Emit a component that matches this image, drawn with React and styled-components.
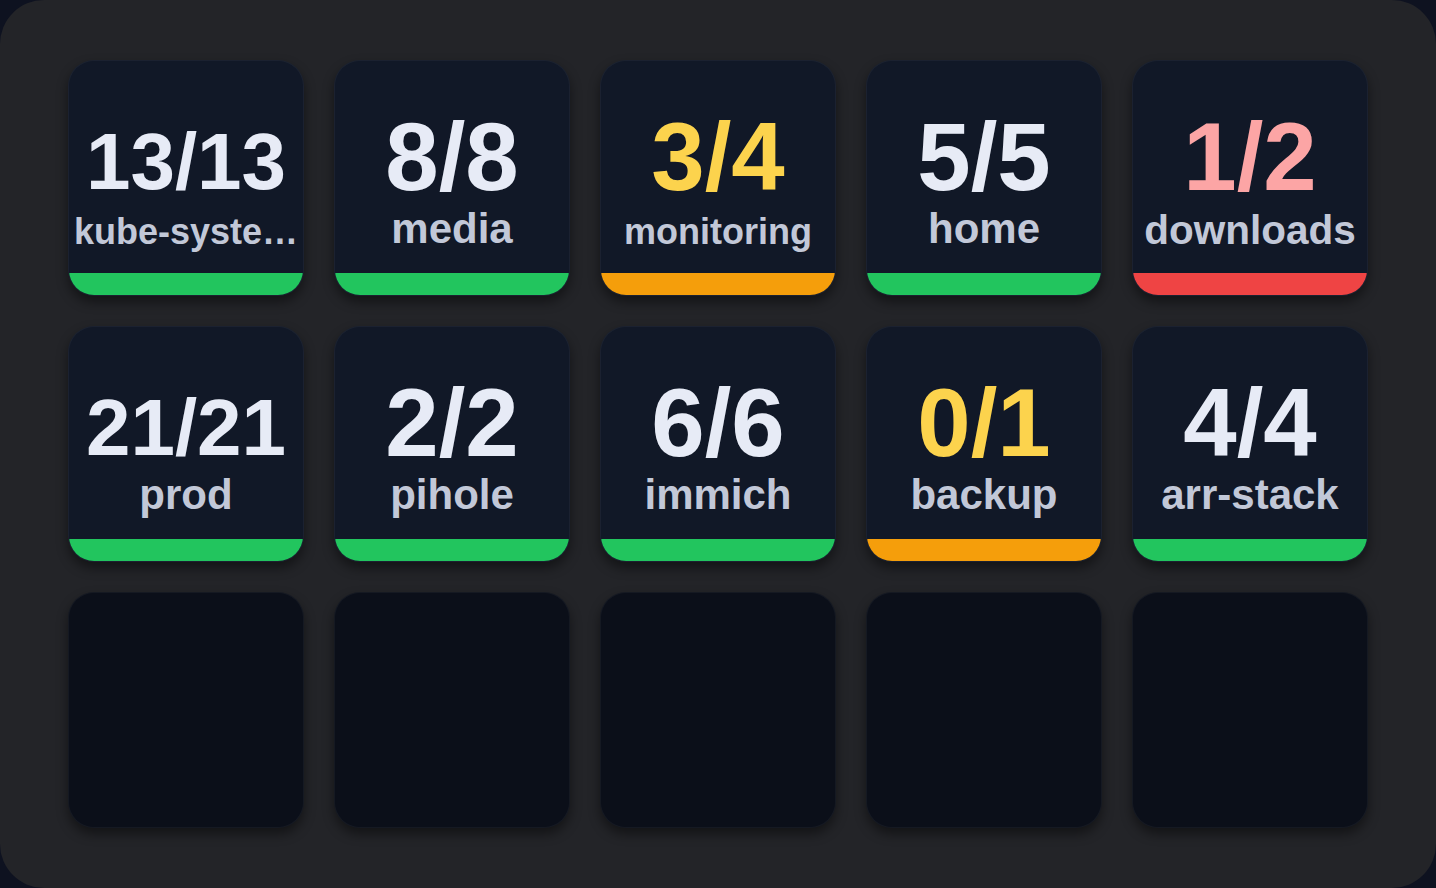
import React from "react";
import styled, { createGlobalStyle } from "styled-components";

const GlobalStyle = createGlobalStyle`
  html, body {
    margin: 0;
    padding: 0;
    background: #0e1220;
  }
  body {
    font-family: "Liberation Sans", Arial, sans-serif;
  }
`;

const TONES = {
  ok: { value: "#e7ebf6", bar: "#22c55e" },
  warn: { value: "#fcd34d", bar: "#f59e0b" },
  bad: { value: "#fca5a5", bar: "#ef4444" },
};

const namespaces = [
  { ready: 13, total: 13, name: "kube-syste…", valueSize: 80, nameSize: 36 },
  { ready: 8, total: 8, name: "media", valueSize: 96, nameSize: 42 },
  { ready: 3, total: 4, name: "monitoring", valueSize: 96, nameSize: 36 },
  { ready: 5, total: 5, name: "home", valueSize: 96, nameSize: 42 },
  { ready: 1, total: 2, name: "downloads", valueSize: 96, nameSize: 40.5 },
  { ready: 21, total: 21, name: "prod", valueSize: 80, nameSize: 42 },
  { ready: 2, total: 2, name: "pihole", valueSize: 96, nameSize: 42 },
  { ready: 6, total: 6, name: "immich", valueSize: 96, nameSize: 42 },
  { ready: 0, total: 1, name: "backup", valueSize: 96, nameSize: 42 },
  { ready: 4, total: 4, name: "arr-stack", valueSize: 96, nameSize: 42 },
];

// All pods ready is healthy, none or most ready is a warning, half or fewer is bad
const toneOf = ({ ready, total }) => {
  if (ready === total) return "ok";
  if (ready === 0 || ready / total > 0.5) return "warn";
  return "bad";
};

const Panel = styled.main`
  box-sizing: border-box;
  width: 1436px;
  height: 888px;
  background: #232428;
  border-radius: 44px;
  padding: 60px 68px;
`;

const Grid = styled.div`
  display: grid;
  grid-template-columns: repeat(5, 236px);
  grid-auto-rows: 236px;
  gap: 30px;
`;

const Tile = styled.div`
  box-sizing: border-box;
  display: flex;
  flex-direction: column;
  border-radius: 26px;
  overflow: hidden;
  border: 1px solid rgba(255, 255, 255, 0.045);
  background: ${(p) => (p.$empty ? "#0b0f19" : "#111827")};
  box-shadow: 0 6px 12px rgba(0, 0, 0, 0.45);
`;

const Body = styled.div`
  flex: 1;
  display: flex;
  flex-direction: column;
  align-items: center;
  min-height: 0;
`;

/* Baseline of the count sits 130px below the tile top whatever its size */
const Count = styled.div`
  margin-top: ${(p) => 129 - 0.8465 * p.$size}px;
  font-size: ${(p) => p.$size}px;
  line-height: 1;
  font-weight: 700;
  color: ${(p) => p.$color};
  white-space: nowrap;
`;

/* Baseline of the name sits 184px below the tile top */
const Name = styled.div`
  margin-top: ${(p) =>
    183 - 0.8465 * p.$size - (129 + 0.1535 * p.$countSize)}px;
  font-size: ${(p) => p.$size}px;
  line-height: 1;
  font-weight: 700;
  color: #c2c8d8;
  white-space: nowrap;
`;

const StatusBar = styled.div`
  height: 22px;
  flex: none;
  background: ${(p) => p.$color};
`;

function NamespaceTile({ ns }) {
  const tone = TONES[toneOf(ns)];
  return (
    <Tile>
      <Body>
        <Count $size={ns.valueSize} $color={tone.value}>
          {ns.ready}/{ns.total}
        </Count>
        <Name $size={ns.nameSize} $countSize={ns.valueSize}>
          {ns.name}
        </Name>
      </Body>
      <StatusBar $color={tone.bar} />
    </Tile>
  );
}

export default function App() {
  return (
    <>
      <GlobalStyle />
      <Panel>
        <Grid>
          {namespaces.map((ns) => (
            <NamespaceTile key={ns.name} ns={ns} />
          ))}
          {Array.from({ length: 5 }, (_, i) => (
            <Tile key={`empty-${i}`} $empty />
          ))}
        </Grid>
      </Panel>
    </>
  );
}
